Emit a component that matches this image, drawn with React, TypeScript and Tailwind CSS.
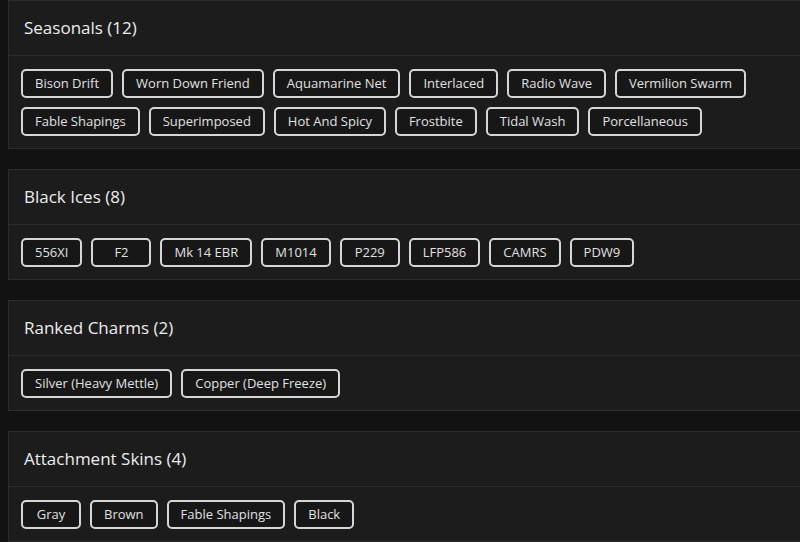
const sections = [
  {
    title: 'Seasonals',
    items: [
      'Bison Drift',
      'Worn Down Friend',
      'Aquamarine Net',
      'Interlaced',
      'Radio Wave',
      'Vermilion Swarm',
      'Fable Shapings',
      'Superimposed',
      'Hot And Spicy',
      'Frostbite',
      'Tidal Wash',
      'Porcellaneous',
    ],
  },
  {
    title: 'Black Ices',
    items: ['556XI', 'F2', 'Mk 14 EBR', 'M1014', 'P229', 'LFP586', 'CAMRS', 'PDW9'],
  },
  {
    title: 'Ranked Charms',
    items: ['Silver (Heavy Mettle)', 'Copper (Deep Freeze)'],
  },
  {
    title: 'Attachment Skins',
    items: ['Gray', 'Brown', 'Fable Shapings', 'Black'],
  },
]

function Tag({ label }: { label: string }) {
  return (
    <span className="flex h-[29px] min-w-[60px] items-center justify-center rounded-[5px] border-2 border-[#d6d6d6] bg-[#171717] px-3 text-[13px] text-[#e0e0e0]">
      {label}
    </span>
  )
}

function Section({ title, items }: { title: string; items: string[] }) {
  return (
    <div className="-mr-6 border border-[#2c2c2c] bg-[#1c1c1c]">
      <div className="flex h-[55px] items-center border-b border-[#2c2c2c] px-[15px] pb-px text-[17px] font-medium text-[#ececec]">
        {title} ({items.length})
      </div>
      <div className="flex flex-wrap gap-[9px] px-3 pb-3 pt-[13px]">
        {items.map((item) => (
          <Tag key={item} label={item} />
        ))}
      </div>
    </div>
  )
}

export default function App() {
  return (
    <div
      className="h-[542px] w-[800px] overflow-hidden bg-[#121212] pl-2"
      style={{ fontFamily: '"Open Sans", "Noto Sans", sans-serif' }}
    >
      <div className="flex flex-col gap-5">
        {sections.map((s) => (
          <Section key={s.title} title={s.title} items={s.items} />
        ))}
      </div>
    </div>
  )
}
